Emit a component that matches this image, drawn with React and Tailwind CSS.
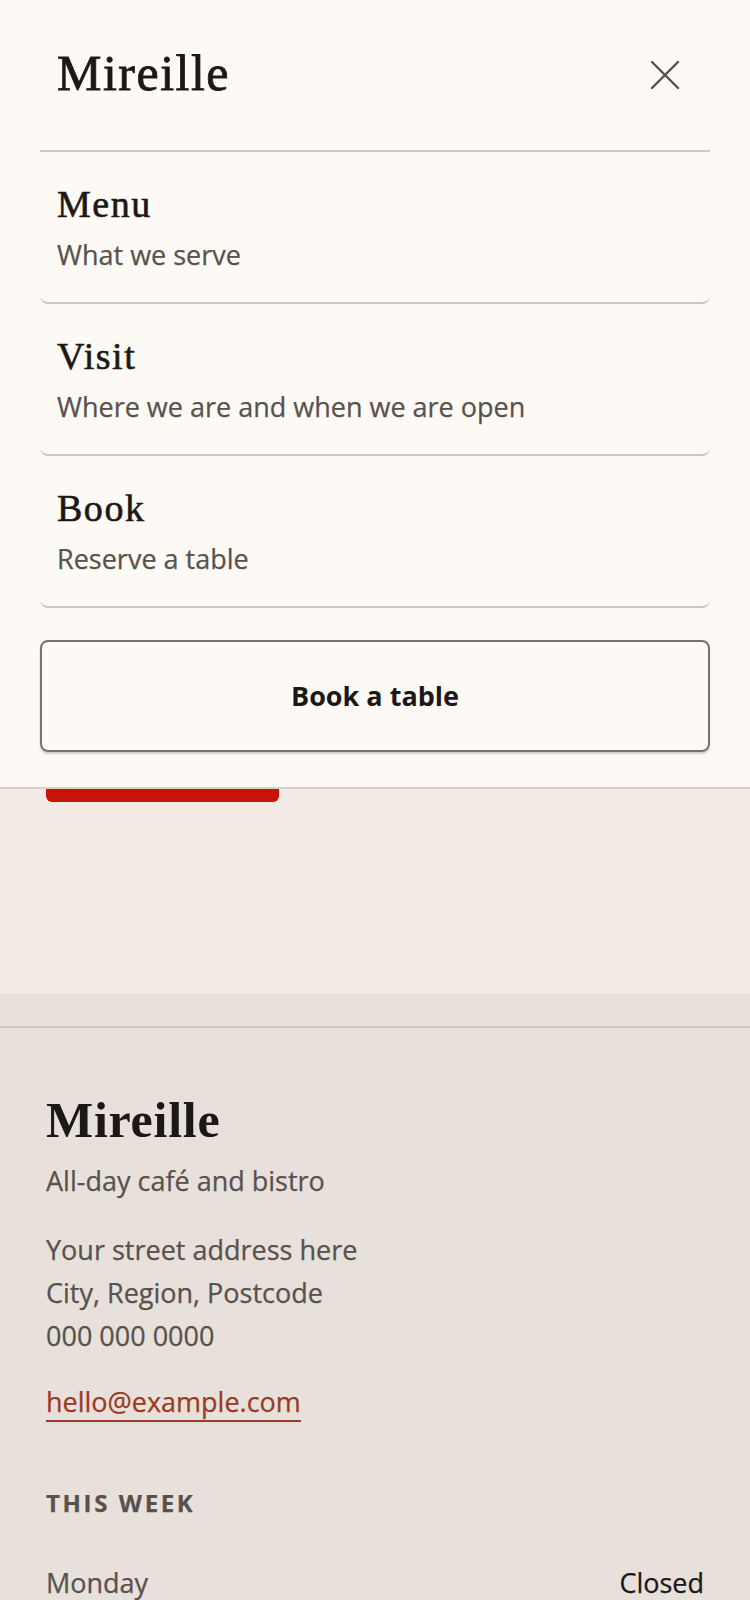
const serif = "font-['Liberation_Serif',serif]";
const sans = "font-['Open_Sans',sans-serif]";

const links = [
  { title: "Menu", sub: "What we serve" },
  { title: "Visit", sub: "Where we are and when we are open" },
  { title: "Book", sub: "Reserve a table" },
];

const hours = [{ day: "Monday", time: "Closed" }];

const CloseIcon = () => (
  <svg width="32" height="32" viewBox="0 0 32 32" fill="none" stroke="currentColor" strokeWidth="2.4" strokeLinecap="round">
    <path d="M3 3 29 29M29 3 3 29" />
  </svg>
);

const NavPanel = () => (
  <div className="absolute inset-x-0 top-0 z-10 bg-[#fdfaf6] border-b-2 border-[#d6d0c9] px-[40px] pb-[35px]">
    {/* header */}
    <div className="h-[152px] flex items-center justify-between border-b-2 border-[#cfc9c3]">
      <span className={`${serif} mb-[4px] pl-[17px] text-[50px] leading-[52px] tracking-[0.03em] [-webkit-text-stroke:0.8px] text-[#1c1815]`}>
        Mireille
      </span>
      <button className="w-12 h-12 mr-[21px] flex items-center justify-center text-[#55504b]">
        <CloseIcon />
      </button>
    </div>

    {/* links */}
    {links.map((l) => (
      <a
        key={l.title}
        href="#"
        className="block rounded-lg border-b-2 border-[#cbc5be] px-[17px] pt-[30px] pb-[27px]"
      >
        <div className={`${serif} text-[38px] leading-[44px] tracking-[0.04em] [-webkit-text-stroke:0.6px] text-[#1c1815]`}>
          {l.title}
        </div>
        <div className={`${sans} mt-[9px] text-[27px] leading-[40px] [-webkit-text-stroke:0.25px] text-[#57524c]`}>{l.sub}</div>
      </a>
    ))}

    <button
      className={`${sans} mt-[32px] w-full h-[112px] rounded-lg border-2 border-[#77726c] shadow-[0_2px_2px_rgba(0,0,0,0.18)] text-[27px] font-bold text-[#1c1815]`}
    >
      Book a table
    </button>
  </div>
);

export default function App() {
  return (
    <div className={`relative min-h-screen bg-[#e8e0da] ${sans}`}>
      <NavPanel />

      {/* hero (mostly under the open menu) */}
      <section className="bg-[#f2ebe5] px-[46px] pt-[738px] pb-[192px]">
        <a
          href="#"
          className="flex items-center justify-center w-[233px] h-[64px] rounded-md bg-[#c8140a] text-white text-[27px] font-bold"
        >
          Book a table
        </a>
      </section>

      <footer className="bg-[#e8e0da]">
        <div className="h-[32px]" />
        <div className="border-t-2 border-[#cdc6bf] px-[46px] pt-[64px] pb-[60px] [-webkit-text-stroke:0.25px]">
          <div className={`${serif} text-[50px] leading-[56px] font-bold tracking-[0.015em] [-webkit-text-stroke:0px] text-[#1c1815]`}>
            Mireille
          </div>
          <p className="mt-[13px] text-[27px] leading-[40px] text-[#57524c]">All-day café and bistro</p>

          <div className="mt-[27px] text-[27px] leading-[43px] text-[#57524c]">
            <p>Your street address here</p>
            <p>City, Region, Postcode</p>
            <p>000 000 0000</p>
          </div>

          <a
            href="mailto:hello@example.com"
            className="inline-block mt-[26px] text-[27px] leading-[37px] text-[#9b3a22] border-b-2 border-[#9b3a22]"
          >
            hello@example.com
          </a>

          <h3 className="mt-[65px] text-[24px] leading-[32px] font-bold tracking-[0.11em] text-[#57524c]">
            THIS WEEK
          </h3>

          <ul className="mt-[44px]">
            {hours.map((h) => (
              <li key={h.day} className="flex justify-between text-[27px] leading-[40px]">
                <span className="text-[#57524c]">{h.day}</span>
                <span className="text-[#1c1815]">{h.time}</span>
              </li>
            ))}
          </ul>
        </div>
      </footer>
    </div>
  );
}
